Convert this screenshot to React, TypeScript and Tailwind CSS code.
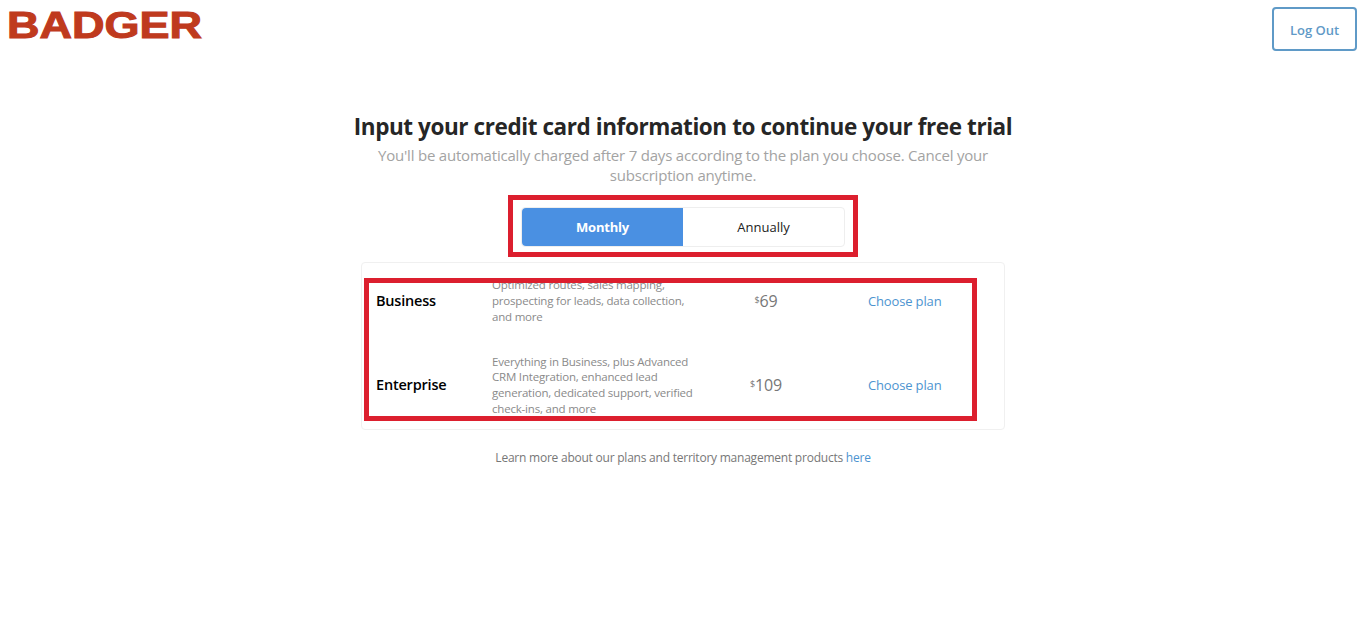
const font = "font-['Open_Sans',_'Noto_Sans',sans-serif]";

const plans = [
  {
    name: "Business",
    desc: "Optimized routes, sales mapping, prospecting for leads, data collection, and more",
    price: "69",
  },
  {
    name: "Enterprise",
    desc: "Everything in Business, plus Advanced CRM Integration, enhanced lead generation, dedicated support, verified check-ins, and more",
    price: "109",
  },
];

function PlanRow({ name, desc, price, className }: { name: string; desc: string; price: string; className: string }) {
  return (
    <div className={`flex items-center ${className}`}>
      <div className="w-[116px] shrink-0 text-[14.5px] font-semibold tracking-[-0.2px] text-black">{name}</div>
      <div className="w-[208px] shrink-0 text-[11.5px] leading-[15.7px] tracking-[-0.2px] text-[#8a8a8a]">{desc}</div>
      <div className="ml-[6px] w-[120px] shrink-0 text-center text-[16px] tracking-[-0.2px] text-[#777777]">
        <sup className="text-[9px]">$</sup>
        {price}
      </div>
      <a className="ml-[42px] pt-px text-[13px] tracking-[-0.15px] text-[#4d94d0]">Choose plan</a>
    </div>
  );
}

export default function App() {
  return (
    <div className={`relative min-h-[617px] bg-white ${font}`}>
      <header className="flex h-[60px] items-start justify-between pl-[7px] pr-[9px] pt-[7px]">
        <div className="mt-[-1px] h-[40px] w-[193px] origin-left scale-x-[1.25] font-['Liberation_Sans',sans-serif] text-[36px] leading-[40px] font-bold text-[#bf3a1e] [-webkit-text-stroke:1px_#bf3a1e]">
          BADGER
        </div>
        <button className="h-[44px] w-[85px] rounded border-2 border-[#5f9ac7] pt-[3px] text-[13px] font-semibold text-[#5f9ac7]">
          Log Out
        </button>
      </header>

      <main className="flex flex-col items-center pt-[51px]">
        <h1 className="text-[22.5px] leading-[32px] font-bold tracking-[-0.42px] text-[#262626]">
          Input your credit card information to continue your free trial
        </h1>
        <p className="mt-[2px] w-[640px] text-center text-[15px] leading-[20px] tracking-[-0.2px] text-[#a3a3a3]">
          You'll be automatically charged after 7 days according to the plan you choose. Cancel your subscription anytime.
        </p>

        <div className="mt-[22px] flex h-[40px] w-[324px] rounded border border-[#eeeeee]">
          <div className="flex w-[161px] items-center justify-center rounded-l bg-[#4a90e2] pt-[2px] text-[13px] font-bold tracking-[-0.2px] text-white">
            Monthly
          </div>
          <div className="flex flex-1 items-center justify-center pt-[2px] text-[13px] text-[#222222]">Annually</div>
        </div>

        <div className="mt-[15px] h-[168px] w-[644px] rounded border border-[#f0f0f0] pl-[14px]">
          <PlanRow {...plans[0]} className="mt-[14px] h-[48px]" />
          <PlanRow {...plans[1]} className="mt-[28px] h-[64px]" />
        </div>

        <p className="mt-[20px] text-[12px] leading-[16px] tracking-[-0.23px] text-[#777777]">
          Learn more about our plans and territory management products <a className="text-[#4d94d0]">here</a>
        </p>
      </main>

      {/* annotation boxes drawn over the screenshot */}
      <div className="absolute top-[195px] left-[508px] h-[62px] w-[350px] border-[5px] border-[#dc1f2e]" />
      <div className="absolute top-[278px] left-[364px] h-[143px] w-[613px] border-[5px] border-[#dc1f2e]" />
    </div>
  );
}
